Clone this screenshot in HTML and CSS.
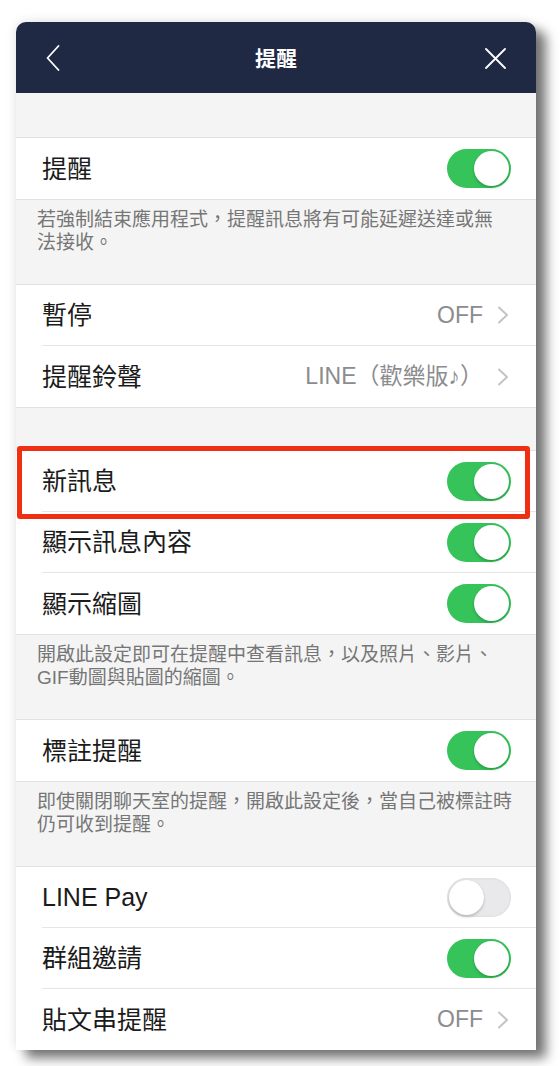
FILE: index.html
```html
<!DOCTYPE html>
<html lang="zh-Hant">
<head>
<meta charset="utf-8">
<title>提醒</title>
<link rel="stylesheet" href="styles.css">
</head>
<body>
<div class="panel">
  <header class="topbar">
    <div class="tb-left">
      <svg width="14" height="26" viewBox="0 0 14 26"><polyline points="12.5,1 1.5,13 12.5,25" fill="none" stroke="#fff" stroke-width="1.8" stroke-linecap="round" stroke-linejoin="round"/></svg>
    </div>
    <div class="tb-title">提醒</div>
    <div class="tb-right">
      <svg width="21" height="21" viewBox="0 0 21 21"><path d="M1 1 L20 20 M20 1 L1 20" fill="none" stroke="#fff" stroke-width="1.8" stroke-linecap="round"/></svg>
    </div>
  </header>

  <div class="gap"></div>

  <section class="group">
    <div class="row"><div class="row-inner"><span class="label">提醒</span><span class="toggle on"><span class="knob"></span></span></div></div>
  </section>
  <p class="note">若強制結束應用程式，提醒訊息將有可能延遲送達或無<br>法接收。</p>

  <section class="group">
    <div class="row"><div class="row-inner link"><span class="label">暫停</span><span class="value">OFF</span><svg class="chev" width="12" height="18" viewBox="0 0 12 18"><polyline points="2,1.5 10,9 2,16.5" fill="none" stroke="#c4c4c7" stroke-width="2" stroke-linecap="round" stroke-linejoin="round"/></svg></div></div>
    <div class="row"><div class="row-inner link"><span class="label">提醒鈴聲</span><span class="value">LINE（歡樂版♪）</span><svg class="chev" width="12" height="18" viewBox="0 0 12 18"><polyline points="2,1.5 10,9 2,16.5" fill="none" stroke="#c4c4c7" stroke-width="2" stroke-linecap="round" stroke-linejoin="round"/></svg></div></div>
  </section>

  <div class="gap small"></div>

  <section class="group">
    <div class="row highlighted"><div class="row-inner"><span class="label">新訊息</span><span class="toggle on"><span class="knob"></span></span></div><div class="mark"></div></div>
    <div class="row"><div class="row-inner"><span class="label">顯示訊息內容</span><span class="toggle on"><span class="knob"></span></span></div></div>
    <div class="row"><div class="row-inner"><span class="label">顯示縮圖</span><span class="toggle on"><span class="knob"></span></span></div></div>
  </section>
  <p class="note">開啟此設定即可在提醒中查看訊息，以及照片、影片、<br>GIF動圖與貼圖的縮圖。</p>

  <section class="group">
    <div class="row"><div class="row-inner"><span class="label">標註提醒</span><span class="toggle on"><span class="knob"></span></span></div></div>
  </section>
  <p class="note">即使關閉聊天室的提醒，開啟此設定後，當自己被標註時<br>仍可收到提醒。</p>

  <section class="group last">
    <div class="row"><div class="row-inner"><span class="label">LINE Pay</span><span class="toggle off"><span class="knob"></span></span></div></div>
    <div class="row"><div class="row-inner"><span class="label">群組邀請</span><span class="toggle on"><span class="knob"></span></span></div></div>
    <div class="row"><div class="row-inner link"><span class="label">貼文串提醒</span><span class="value">OFF</span><svg class="chev" width="12" height="18" viewBox="0 0 12 18"><polyline points="2,1.5 10,9 2,16.5" fill="none" stroke="#c4c4c7" stroke-width="2" stroke-linecap="round" stroke-linejoin="round"/></svg></div></div>
  </section>
</div>
</body>
</html>
```

FILE: styles.css
```css
* { box-sizing: border-box; }
html, body { margin: 0; padding: 0; background: #fff; }
body {
  font-family: "Liberation Sans", "Noto Sans CJK TC", sans-serif;
  height: 1066px;
  overflow: hidden;
}
.panel {
  margin: 22px 0 0 16px;
  width: 520px;
  background: #f4f4f4;
  border-radius: 10px 10px 0 0;
  box-shadow: 10px 8px 12px rgba(0,0,0,0.55), -2px -2px 10px rgba(0,0,0,0.08);
}
.topbar {
  height: 71px;
  background: #1f2944;
  border-radius: 10px 10px 0 0;
  display: grid;
  grid-template-columns: 1fr auto 1fr;
  align-items: center;
  padding: 0 30px;
}
.tb-left { display: flex; justify-content: flex-start; padding-top: 1px; }
.tb-right { display: flex; justify-content: flex-end; padding-top: 2px; }
.tb-title {
  color: #fff;
  font-family: "Noto Sans CJK TC", sans-serif;
  font-weight: 700;
  font-size: 21px;
  line-height: 1;
}
.gap { height: 44px; }
.gap.small { height: 42px; }
.group {
  background: #fff;
  border-top: 1px solid #e1e1e1;
  border-bottom: 1px solid #e1e1e1;
}
.group.last { border-bottom: none; }
.row { padding-left: 26px; position: relative; }
.row-inner {
  height: 61px;
  display: flex;
  align-items: center;
  padding-right: 25px;
  border-bottom: 1px solid #e6e6e6;
}
.row:last-child .row-inner { border-bottom: none; }
.row-inner.link { padding-right: 27px; }
.label {
  flex: 1;
  font-size: 25px;
  color: #1b1b1b;
  line-height: 1;
  padding-top: 1px;
}
.value {
  font-size: 23px;
  color: #8c8c8e;
  line-height: 1;
}
.chev { margin-left: 14px; flex: none; }
.toggle {
  width: 64px;
  height: 39px;
  border-radius: 20px;
  display: flex;
  align-items: center;
  padding: 2px;
  flex: none;
}
.toggle.on { background: #35c35a; justify-content: flex-end; }
.toggle.off {
  background: #e9e9eb;
  justify-content: flex-start;
  box-shadow: inset 0 0 0 1.5px #e2e2e4;
}
.knob {
  width: 35px;
  height: 35px;
  border-radius: 50%;
  background: #fff;
  box-shadow: 0 2px 3px rgba(0,0,0,0.18), 0 0 1px rgba(0,0,0,0.15);
}
.note {
  margin: 0;
  padding: 8px 10px 30px 21px;
  font-size: 19px;
  line-height: 23px;
  color: #767676;
  white-space: nowrap;
  font-family: "Liberation Sans", "Noto Sans CJK TC", sans-serif;
}
.mark {
  position: absolute;
  top: -5px;
  left: 1px;
  right: 6px;
  bottom: -7px;
  border: 5px solid #f02f12;
  border-radius: 3px;
  z-index: 2;
  pointer-events: none;
}
```
